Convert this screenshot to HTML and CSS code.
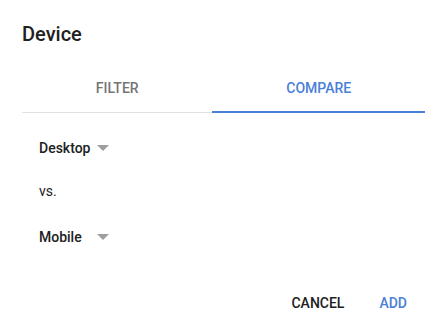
FILE: index.html
```html
<!DOCTYPE html>
<html lang="en">
<head>
    <meta charset="UTF-8">
    <meta name="viewport" content="width=device-width, initial-scale=1.0">
    <title>Device</title>
    <link rel="stylesheet" href="styles.css">
</head>
<body>
    <div class="dialog">
        <div class="dialog-title">Device</div>

        <div class="tab-bar">
            <div class="tab">Filter</div>
            <div class="tab active">Compare</div>
        </div>

        <div class="dialog-body">
            <div class="dropdown">
                <span class="dropdown-label">Desktop</span>
                <svg class="dropdown-arrow" width="12" height="6" viewBox="0 0 12 6">
                    <path d="M0,0H12L6,6Z"/>
                </svg>
            </div>
            <div class="vs">vs.</div>
            <div class="dropdown mobile">
                <span class="dropdown-label">Mobile</span>
                <svg class="dropdown-arrow" width="12" height="6" viewBox="0 0 12 6">
                    <path d="M0,0H12L6,6Z"/>
                </svg>
            </div>
        </div>

        <div class="dialog-actions">
            <button class="btn">Cancel</button>
            <button class="btn primary">Add</button>
        </div>
    </div>
</body>
</html>
```

FILE: styles.css
```css
* {
    margin: 0;
    padding: 0;
    box-sizing: border-box;
}

body {
    font-family: Roboto, "Liberation Sans", Arial, sans-serif;
    background: #fff;
    color: #212121;
    min-height: 100vh;
}

.dialog {
    width: 448px;
    padding: 22px 23px 0 22px;
}

.dialog-title {
    font-size: 20px;
    font-weight: 500;
    line-height: 24px;
    color: #212121;
    margin-bottom: 19px;
}

.tab-bar {
    display: flex;
    border-bottom: 1px solid #e0e0e0;
}

.tab {
    flex: 1 1 auto;
    height: 48px;
    display: flex;
    align-items: center;
    justify-content: center;
    font-size: 14px;
    font-weight: 500;
    text-transform: uppercase;
    color: #757575;
    border-bottom: 2px solid transparent;
    margin-bottom: -1px;
}

.tab.active {
    color: #4a80d9;
    border-bottom-color: #4a80d9;
}

.dialog-body {
    padding: 25px 17px 0;
}

.dropdown {
    display: flex;
    align-items: center;
    height: 20px;
    font-size: 14px;
    font-weight: 500;
}

.dropdown-label {
    width: 58px;
}

.dropdown-arrow {
    fill: #9e9e9e;
}

.vs {
    font-size: 14px;
    line-height: 20px;
    margin-top: 23px;
}

.dropdown.mobile {
    margin-top: 26px;
}

.dialog-actions {
    display: flex;
    justify-content: flex-end;
    gap: 19px;
    margin-top: 46px;
    padding-right: 10px;
}

.btn {
    background: none;
    border: none;
    font-family: inherit;
    font-size: 14px;
    font-weight: 500;
    text-transform: uppercase;
    line-height: 20px;
    padding: 0 8px;
    color: #212121;
    cursor: pointer;
}

.btn.primary {
    color: #4a80d9;
}
```
